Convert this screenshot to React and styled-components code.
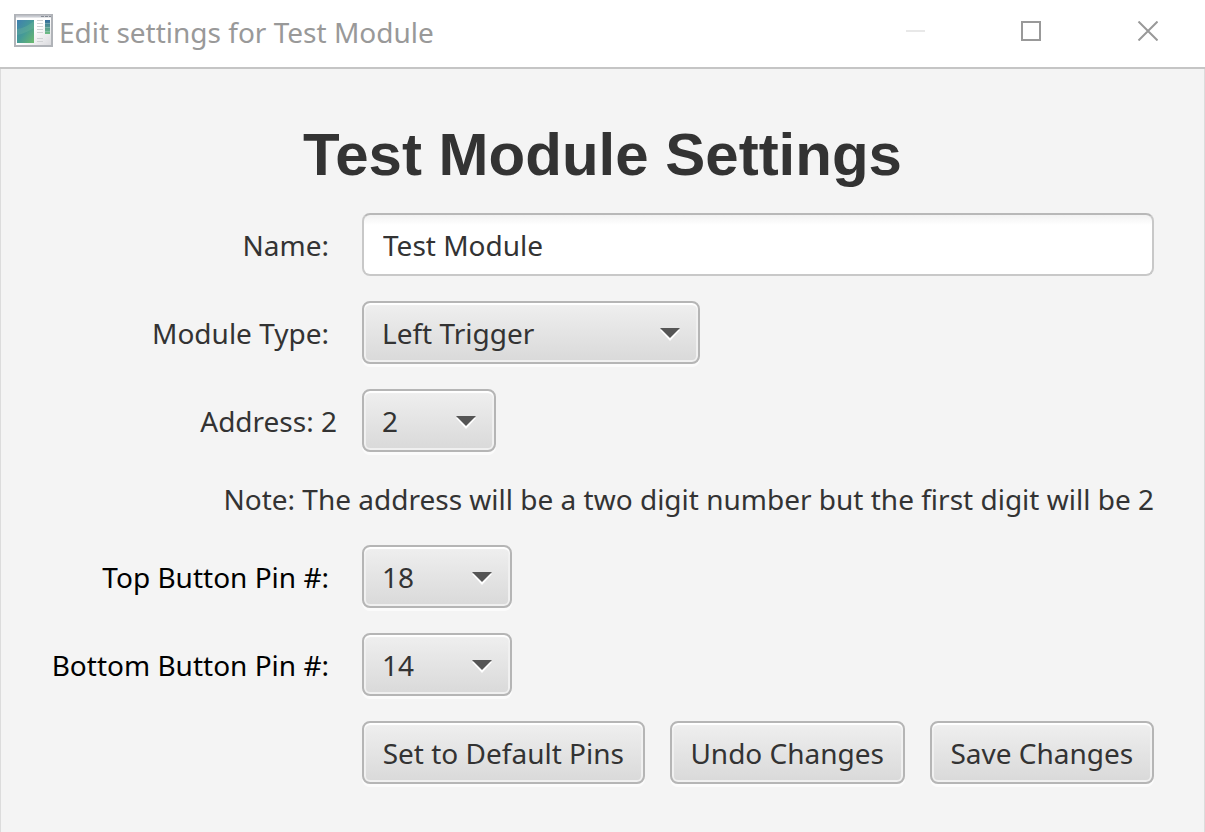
import React from "react";
import styled, { createGlobalStyle } from "styled-components";

const GlobalStyle = createGlobalStyle`
  * { box-sizing: border-box; }
  html, body, #root { min-height: 100vh; }
  body {
    margin: 0;
    background: #f4f4f4;
    color: #333;
    font-family: "Noto Sans", "Open Sans", sans-serif;
    font-size: 28px;
    line-height: 42px;
    font-variant-ligatures: none;
  }
  input, select, button { font: inherit; color: inherit; margin: 0; }
`;

const Window = styled.div`
  min-height: 100vh;
  display: flex;
  flex-direction: column;
`;

const TitleBar = styled.header`
  display: flex;
  align-items: center;
  height: 69px;
  padding: 0 0 6px 14px;
  background: #fff;
  border-bottom: 2px solid #c5c5c5;
  color: #999;
`;

const AppIcon = styled.svg`
  flex: none;
  width: 40px;
  height: 34px;
  margin-right: 5px;
`;

const WindowTitle = styled.span`
  flex: 1;
  padding-top: 2px;
  white-space: nowrap;
`;

const CaptionButton = styled.button`
  width: 116px;
  height: 60px;
  padding: 0;
  border: 0;
  background: none;
  color: ${(p) => (p.disabled ? "#e8e8e8" : "#999")};
  display: grid;
  place-items: center;
`;

const Body = styled.main`
  flex: 1;
  padding: 48px 50px;
  border: solid #dcdcdc;
  border-width: 0 1px;
`;

const Heading = styled.h1`
  margin: 0 0 21px;
  font: bold 60px/75px "Liberation Sans", Arial, sans-serif;
  text-align: center;
  white-space: nowrap;
`;

const Form = styled.form`
  display: grid;
  grid-template-columns: 286px 1fr;
  gap: 25px;
  align-items: center;
`;

const Label = styled.label`
  justify-self: end;
  padding-right: ${(p) => (p.$flush ? 0 : 8)}px;
  color: ${(p) => (p.$strong ? "#000" : "#333")};
  white-space: nowrap;
`;

const TextField = styled.input`
  width: 100%;
  height: 63px;
  padding: 0 19px;
  border: 2px solid #c8c8c8;
  border-top-color: #b8b8b8;
  border-radius: 8px;
  background: linear-gradient(#f2f2f2, #fff 10px);
  outline: none;
`;

const raised = `
  height: 63px;
  border: 2px solid #b5b5b5;
  border-radius: 8px;
  background: linear-gradient(#efefef, #d9d9d9);
  box-shadow: inset 0 2px 1px #fff, inset 0 0 0 2px #f0f0f0, 0 3px 0 #fbfbfb;
`;

const SelectBox = styled.div`
  display: grid;
  align-items: center;
  width: ${(p) => p.$width}px;
  > * { grid-area: 1 / 1; }
`;

const NativeSelect = styled.select`
  ${raised}
  appearance: none;
  width: 100%;
  padding: 0 48px 0 18px;
`;

const Arrow = styled.svg`
  justify-self: end;
  width: 20px;
  height: 13px;
  margin: 4px 20px 0 0;
  pointer-events: none;
`;

const Note = styled.p`
  grid-column: 1 / -1;
  height: 43px;
  margin: 0;
  padding-top: 1px;
  text-align: right;
  white-space: nowrap;
`;

const Actions = styled.div`
  grid-column: 2;
  display: flex;
  gap: 25px;
`;

const Button = styled.button`
  ${raised}
  flex: 1 1 auto;
  padding: 0;
  white-space: nowrap;
`;

function Select({ id, width, options, value }) {
  return (
    <SelectBox $width={width}>
      <NativeSelect id={id} defaultValue={value}>
        {options.map((o) => (
          <option key={o}>{o}</option>
        ))}
      </NativeSelect>
      <Arrow viewBox="0 0 20 13" aria-hidden="true">
        <path d="M0 2h20L10 13z" fill="#fff" />
        <path d="M0 0h20L10 10z" fill="#555" />
      </Arrow>
    </SelectBox>
  );
}

const digits = ["0", "1", "2", "3", "4", "5", "6", "7", "8", "9"];
const pins = ["12", "14", "16", "18", "20"];

export default function App() {
  return (
    <>
      <GlobalStyle />
      <Window>
        <TitleBar>
          <AppIcon viewBox="0 0 40 34" aria-hidden="true">
            <defs>
              <linearGradient id="pane" x1="0" y1="0" x2="1" y2="1">
                <stop offset="0" stopColor="#3f7fb0" />
                <stop offset=".5" stopColor="#459a97" />
                <stop offset="1" stopColor="#6cbb6c" />
              </linearGradient>
              <linearGradient id="strip" x1="0" y1="0" x2="0" y2="1">
                <stop offset="0" stopColor="#336c9e" />
                <stop offset="1" stopColor="#70bf83" />
              </linearGradient>
              <linearGradient id="frame" x1="0" y1="0" x2="1" y2="1">
                <stop offset=".5" stopColor="#fff" />
                <stop offset="1" stopColor="#d8d8dc" />
              </linearGradient>
            </defs>
            <rect x="1" y="1" width="37" height="31" fill="url(#frame)" stroke="#b0b3b8" strokeWidth="2" />
            <path d="M2 2.5h35" stroke="#c9ccd2" strokeWidth="2" />
            <path d="M27 2.5h10" stroke="#858b94" strokeDasharray="3 1" />
            <rect x="3" y="6" width="17" height="23" fill="url(#pane)" />
            <path d="M3 15C10 14 15 11 20 7v7C15 17 9 20 3 21z" fill="#76bd9b" opacity=".3" />
            <path d="M23 6.5h6M23 9.5h6M23 12.5h6M23 15.5h6M23 18.5h6M23 24.5h6M23 27.5h6" stroke="#d0d2d4" />
            <rect x="31" y="6" width="5" height="14" fill="url(#strip)" />
            <path d="M31 9.5h5M31 13.5h5M31 17.5h5" stroke="#b7d5d2" opacity=".4" />
          </AppIcon>
          <WindowTitle>Edit settings for Test Module</WindowTitle>
          <CaptionButton type="button" disabled aria-label="Minimize">
            <svg width="20" height="20" viewBox="0 0 20 20">
              <path d="M1 10h19" stroke="currentColor" strokeWidth="2" />
            </svg>
          </CaptionButton>
          <CaptionButton type="button" aria-label="Maximize">
            <svg width="20" height="20" viewBox="0 0 20 20">
              <rect x="1" y="1" width="18" height="18" fill="none" stroke="currentColor" strokeWidth="2" />
            </svg>
          </CaptionButton>
          <CaptionButton type="button" aria-label="Close">
            <svg width="22" height="20" viewBox="0 0 22 20">
              <path d="M2.5 .5l19 19M21.5 .5l-19 19" stroke="currentColor" strokeWidth="2" />
            </svg>
          </CaptionButton>
        </TitleBar>
        <Body>
          <Heading>Test Module Settings</Heading>
          <Form onSubmit={(e) => e.preventDefault()}>
            <Label htmlFor="name">Name:</Label>
            <TextField id="name" type="text" defaultValue="Test Module" />

            <Label htmlFor="type">Module Type:</Label>
            <Select id="type" width={338} value="Left Trigger" options={["Left Trigger", "Right Trigger"]} />

            <Label htmlFor="address" $flush>Address: 2</Label>
            <Select id="address" width={134} value="2" options={digits} />

            <Note>Note: The address will be a two digit number but the first digit will be 2</Note>

            <Label htmlFor="top-pin" $strong>Top Button Pin #:</Label>
            <Select id="top-pin" width={150} value="18" options={pins} />

            <Label htmlFor="bottom-pin" $strong>Bottom Button Pin #:</Label>
            <Select id="bottom-pin" width={150} value="14" options={pins} />

            <Actions>
              <Button type="button">Set to Default Pins</Button>
              <Button type="button">Undo Changes</Button>
              <Button type="submit">Save Changes</Button>
            </Actions>
          </Form>
        </Body>
      </Window>
    </>
  );
}
